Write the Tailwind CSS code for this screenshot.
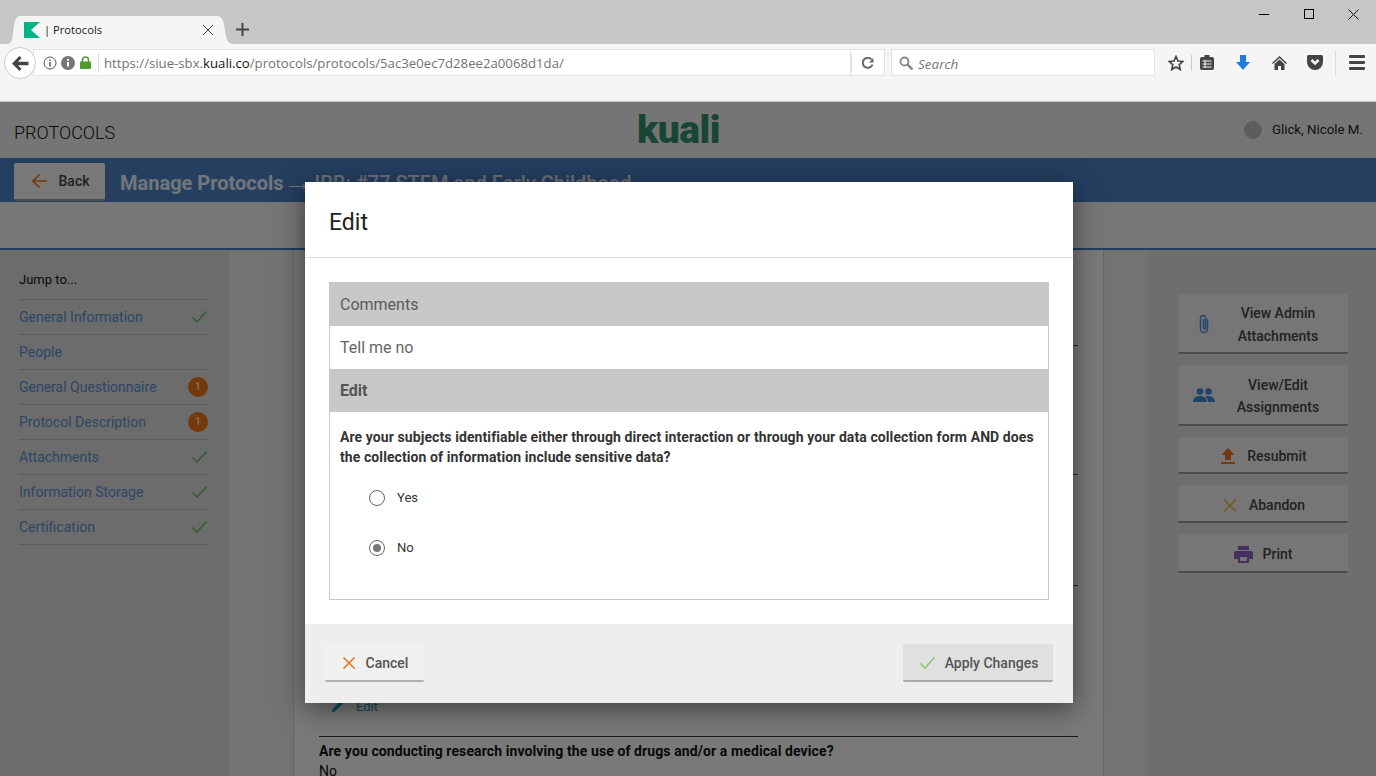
<!DOCTYPE html>
<html lang="en">
<head>
    <meta charset="UTF-8">
    <title>| Protocols</title>
    <script src="https://cdn.jsdelivr.net/npm/@tailwindcss/browser@4"></script>
</head>
<body class="w-[1376px] h-[776px] overflow-hidden flex flex-col bg-white font-['Roboto',sans-serif]">
    <!-- browser tab strip -->
    <div class="h-[44px] shrink-0 bg-[#c6c6c6] flex items-end pl-[6px] relative">
        <svg class="shrink-0" width="14" height="28" viewBox="0 0 14 28" fill="#f5f5f5"><path d="M0 28c5 0 6-3 7-10C8 8 9 0 14 0v28z"/></svg>
        <div class="w-[197px] h-[28px] bg-[#f5f5f5] flex items-center pl-[4px] pr-[3px] gap-[4px] font-['Open_Sans',sans-serif] text-[11.2px] text-[#222]">
            <svg class="shrink-0 mr-[2px]" width="16" height="16" viewBox="0 0 16 16"><rect width="16" height="16" fill="#00b488"/><path d="M16 0L7 8l9 8z" fill="#f5f5f5"/></svg>
            <span class="flex-1 -ml-[2px]">| Protocols</span>
            <svg width="12" height="12" viewBox="0 0 12 12" stroke="#444" fill="none"><path d="M1 1l10 10M11 1L1 11"/></svg>
        </div>
        <svg class="shrink-0" width="16" height="28" viewBox="0 0 16 28" fill="#f5f5f5"><path d="M0 0c5 0 7 6 8 14 1 9 3 14 8 14H0z"/></svg>
        <svg class="ml-[3px] mb-[8px]" width="13" height="13" viewBox="0 0 13 13" stroke="#444" stroke-width="2" fill="none"><path d="M6.500 0v13M0 6.500h13"/></svg>
        <div class="absolute top-0 right-0 h-[28px] flex items-center">
            <div class="w-[45px] flex justify-center"><div class="w-[10px] h-px bg-black"></div></div>
            <div class="w-[45px] flex justify-center"><div class="w-[10px] h-[10px] border border-black"></div></div>
            <div class="w-[45px] flex justify-center"><svg width="11" height="11" viewBox="0 0 11 11" stroke="#111" fill="none"><path d="M.5.5l10 10M10.500.5l-10 10"/></svg></div>
        </div>
    </div>
    <!-- browser toolbar -->
    <div class="h-[58px] shrink-0 bg-[#f5f5f5] border-b border-[#c8c8c8] font-['Open_Sans',sans-serif]">
        <div class="flex items-start pt-[3px] pl-[4px]">
            <div class="w-[32px] h-[32px] rounded-full bg-white border border-[#ccc] flex items-center justify-center z-10 shrink-0">
                <svg width="17" height="15" viewBox="0 0 17 15" fill="#444"><path d="M7.500 0l2 2L6 5.800h10.500v3.400H6l3.500 3.800-2 2L0 7.500z"/></svg>
            </div>
            <div class="w-[818px] h-[27px] mt-[2px] -ml-[3px] shrink-0 bg-white border border-[#e3e3e3] flex items-center text-[13.2px] text-[#737373] pl-[9px] whitespace-nowrap">
                <svg width="14" height="14" viewBox="0 0 14 14" fill="none" stroke="#555"><circle cx="7" cy="7" r="6"/><path d="M7 6v4.500M7 3.500v1.500" stroke-width="1.500"/></svg>
                <svg width="14" height="14" viewBox="0 0 14 14" class="ml-[4px]"><circle cx="7" cy="7" r="7" fill="#777"/><path d="M7 6v4.500M7 3v1.800" stroke="#fff" stroke-width="2"/></svg>
                <svg width="11" height="13" viewBox="0 0 11 13" class="ml-[5px]"><path d="M2.500 6V4a3 3 0 0 1 6 0v2" fill="none" stroke="#4f9a2c" stroke-width="1.500"/><rect y="5.500" width="11" height="7.500" rx="1" fill="#4f9a2c"/></svg>
                <div class="w-px h-[20px] bg-[#ddd] ml-[7px] mr-[5px]"></div>
                <span class="pt-[3px]">https://siue-sbx.<span class="text-[#111]">kuali.co</span>/protocols/protocols/5ac3e0ec7d28ee2a0068d1da/</span>
            </div>
            <div class="w-[34px] h-[27px] mt-[2px] shrink-0 bg-white border border-l-0 border-[#e3e3e3] flex items-center">
                <div class="w-px h-[18px] bg-[#ddd]"></div>
                <svg class="ml-[10px]" width="12" height="12" viewBox="0 0 12 12" fill="none" stroke="#666" stroke-width="2"><path d="M10.500 7.500A5 5 0 1 1 9.500 2.500"/><path d="M11.500 1v4.500H7z" fill="#666" stroke="none"/></svg>
            </div>
            <div class="w-[264px] h-[27px] mt-[2px] ml-[6px] shrink-0 bg-white border border-[#e3e3e3] flex items-center pl-[7px] gap-[5px] text-[13.5px] italic text-[#777]">
                <svg width="14" height="14" viewBox="0 0 14 14" fill="none" stroke="#888" stroke-width="1.800"><circle cx="5.500" cy="5.500" r="4"/><path d="M8.500 8.500l5 5" stroke-width="2.500"/></svg>
                <span class="pt-[3px]">Search</span>
            </div>
            <div class="flex items-center h-[27px] mt-[2px] ml-[13px] shrink-0">
                <svg width="16" height="16" viewBox="0 0 16 16" fill="none" stroke="#444" stroke-width="1.700"><path d="M8 1.500l2 4.500 4.800.5-3.600 3.200 1 4.800L8 12l-4.200 2.500 1-4.800L1.200 6.500 6 6z"/></svg>
                <div class="w-px h-[16px] bg-[#ccc] ml-[7px] mr-[8px]"></div>
                <svg width="14" height="15" viewBox="0 0 14 15"><rect y="2" width="14" height="13" rx="2" fill="#444"/><rect x="4.500" width="5" height="3" fill="#444"/><path d="M2.500 6h9M2.500 9h9M2.500 12h9M5 5v8" stroke="#f5f5f5"/></svg>
                <svg class="ml-[22px]" width="14" height="15" viewBox="0 0 14 15" fill="#1f7fe0"><path d="M4 0h6v7h4l-7 8-7-8h4z"/></svg>
                <svg class="ml-[22px]" width="15" height="14" viewBox="0 0 15 14" fill="#444"><path d="M7.500 0L15 7l-1 1-6.500-6L1 8 0 7z"/><path d="M2.500 8l5-4.500 5 4.500v6H9V10H6v4H2.500z"/></svg>
                <svg class="ml-[20px]" width="16" height="15" viewBox="0 0 16 15"><path d="M1.500 0h13A1.500 1.500 0 0 1 16 1.500V7A8 8 0 0 1 0 7V1.500A1.500 1.500 0 0 1 1.500 0z" fill="#444"/><path d="M4.500 5L8 8.500 11.500 5" fill="none" stroke="#f5f5f5" stroke-width="2.500"/></svg>
                <div class="w-px h-[26px] bg-[#ddd] ml-[12px] mr-[13px]"></div>
                <div class="w-[16px] flex flex-col gap-[3px]"><div class="h-[3px] bg-[#444] rounded-[1px]"></div><div class="h-[3px] bg-[#444] rounded-[1px]"></div><div class="h-[3px] bg-[#444] rounded-[1px]"></div></div>
            </div>
        </div>
    </div>

    <!-- application page -->
    <div class="relative flex-1 overflow-hidden bg-[#e6e6e6]">
        <header class="h-[56px] bg-[#ebebeb] flex items-center justify-between pl-[14px] pr-[13px] relative">
            <span class="text-[18px] font-light text-[#111] mt-[5px]">PROTOCOLS</span>
            <span class="absolute left-[637px] top-[3px] text-[39px] leading-[50px] font-black tracking-[-0.5px] text-[#2f8f68]">kuali</span>
            <div class="flex items-center gap-[10px] text-[13.3px] text-[#222] mt-[-1px]">
                <div class="w-[18px] h-[18px] rounded-full bg-[#bbb]"></div>
                <span>Glick, Nicole M.</span>
            </div>
        </header>
        <div class="h-[44px] bg-[#4a7ec2] flex items-start pl-[14px] overflow-hidden whitespace-nowrap">
            <button class="w-[91px] h-[38px] mt-[5px] bg-[#f0f0f0] rounded-[2px] border-b-2 border-[#999] flex items-center justify-center gap-[12px] pl-[2px] text-[14px] font-medium text-[#444]">
                <svg width="15" height="14" viewBox="0 0 15 14" fill="none" stroke="#e8701a" stroke-width="1.600"><path d="M15 7H1M7.500.5L1 7l6.500 6.500"/></svg>
                Back
            </button>
            <span class="ml-[15px] mt-[11px] text-[20px] leading-[28px] font-bold text-white/85">Manage Protocols</span>
            <svg class="ml-[5px] mt-[25px]" width="17" height="7" viewBox="0 0 17 7" fill="none" stroke="#fff" stroke-opacity="0.8"><path d="M0 3.500h16M13.500 1l3 2.500-3 2.500"/></svg>
            <span class="ml-[9px] mt-[11px] text-[20px] leading-[28px] font-medium text-white/80">IRB: #77 STEM and Early Childhood</span>
        </div>
        <div class="h-[46px] bg-[#ececec]"></div>
        <div class="h-[2px] bg-[#3a7ac4]"></div>
        <div class="flex h-[526px]">
            <aside class="w-[229px] bg-[#d8d8d8] pl-[19px] pr-[20px] text-[14px] pt-[20px]">
                <div class="h-[30px] text-[13px] text-[#111] border-b border-[#bbb]">Jump to...</div>
                <div class="h-[35px] flex items-center justify-between border-b border-[#bbb] text-[#5b8ccf]">General Information<svg class="mr-[2px]" width="15" height="12" viewBox="0 0 15 12" fill="none" stroke="#5cb85c" stroke-width="1.500"><path d="M.5 6.500L5 11 14.500.5"/></svg></div>
                <div class="h-[35px] flex items-center justify-between border-b border-[#bbb] text-[#5b8ccf]">People</div>
                <div class="h-[35px] flex items-center justify-between border-b border-[#bbb] text-[#5b8ccf]">General Questionnaire<span class="w-[20px] h-[20px] mr-[1px] rounded-full bg-[#e87012] text-white/80 text-[11px] font-medium flex items-center justify-center">1</span></div>
                <div class="h-[35px] flex items-center justify-between border-b border-[#bbb] text-[#5b8ccf]">Protocol Description<span class="w-[20px] h-[20px] mr-[1px] rounded-full bg-[#e87012] text-white/80 text-[11px] font-medium flex items-center justify-center">1</span></div>
                <div class="h-[35px] flex items-center justify-between border-b border-[#bbb] text-[#5b8ccf]">Attachments<svg class="mr-[2px]" width="15" height="12" viewBox="0 0 15 12" fill="none" stroke="#5cb85c" stroke-width="1.500"><path d="M.5 6.500L5 11 14.500.5"/></svg></div>
                <div class="h-[35px] flex items-center justify-between border-b border-[#bbb] text-[#5b8ccf]">Information Storage<svg class="mr-[2px]" width="15" height="12" viewBox="0 0 15 12" fill="none" stroke="#5cb85c" stroke-width="1.500"><path d="M.5 6.500L5 11 14.500.5"/></svg></div>
                <div class="h-[35px] flex items-center justify-between border-b border-[#bbb] text-[#5b8ccf]">Certification<svg class="mr-[2px]" width="15" height="12" viewBox="0 0 15 12" fill="none" stroke="#5cb85c" stroke-width="1.500"><path d="M.5 6.500L5 11 14.500.5"/></svg></div>
            </aside>
            <div class="w-[64px] bg-[#e6e6e6]"></div>
            <!-- form behind the dialog -->
            <main class="w-[811px] bg-[#f2f2f2] border-x border-[#ccc] pl-[25px] pr-[25px]">
                <div class="h-[96px] border-b border-[#555]"></div>
                <div class="h-[129px] border-b border-[#555]"></div>
                <div class="h-[111px] border-b border-[#555]"></div>
                <div class="mt-[111px] flex items-center gap-[13px] ml-[13px] text-[13px] text-[#1d9bb5]">
                    <svg width="11" height="11" viewBox="0 0 11 11" fill="#1d9bb5"><path d="M8.500 0L11 2.500 3 10.500 0 11l.5-3z"/></svg>
                    Edit
                </div>
                <div class="mt-[19px] border-t border-[#333] pt-[4px] text-[14px] leading-[20px] tracking-[0.1px] text-[#111]">
                    <p class="font-bold">Are you conducting research involving the use of drugs and/or a medical device?</p>
                    <p>No</p>
                </div>
            </main>
            <div class="w-[44px] bg-[#e6e6e6]"></div>
            <aside class="flex-1 bg-[#dcdcdc] pt-[44px] pl-[30px] pr-[28px] flex flex-col gap-[11px] text-[14px] font-medium text-[#444] text-center">
                <button class="h-[60px] bg-[#ececec] rounded-[2px] border-b-2 border-[#999] flex items-center relative pt-[4px]">
                    <svg class="absolute left-[19px] top-[20px]" width="14" height="20" viewBox="0 0 14 20" fill="none" stroke="#4a90d9" stroke-width="1.500"><path d="M10.500 5v10a3.500 3.500 0 0 1-7 0V4a2.500 2.500 0 0 1 5 0v10a1 1 0 0 1-2 0V5"/></svg>
                    <span class="w-full leading-[23px] pl-[30px]">View Admin<br>Attachments</span>
                </button>
                <button class="h-[61px] bg-[#ececec] rounded-[2px] border-b-2 border-[#999] flex items-center relative pt-[3px]">
                    <svg class="absolute left-[15px] top-[23px]" width="22" height="14" viewBox="0 0 22 14" fill="#3d84d6"><circle cx="7" cy="3.500" r="3.300"/><circle cx="15.500" cy="3.500" r="3.300"/><path d="M0 14c0-4 3-6 7-6s7 2 7 6zM15 14c0-2-1-4-2.500-5.500 4-1.500 9.500.5 9.500 5.500z"/></svg>
                    <span class="w-full leading-[22px] pl-[30px]">View/Edit<br>Assignments</span>
                </button>
                <button class="h-[37px] bg-[#ececec] rounded-[2px] border-b-2 border-[#999] flex items-center justify-center gap-[12px] pt-[3px] pl-[2px]">
                    <svg width="14" height="16" viewBox="0 0 14 16" fill="#e8701a"><path d="M7 0l6.500 7H10v5H4V7H.5zM0 14h14v2H0z"/></svg>
                    Resubmit
                </button>
                <button class="h-[38px] bg-[#ececec] rounded-[2px] border-b-2 border-[#999] flex items-center justify-center gap-[12px] pt-[4px] pl-[2px]">
                    <svg width="14" height="13" viewBox="0 0 14 13" fill="none" stroke="#e8b030" stroke-width="1.500"><path d="M1 .5l12 12M13 .5l-12 12"/></svg>
                    Abandon
                </button>
                <button class="h-[39px] bg-[#ececec] rounded-[2px] border-b-2 border-[#999] flex items-center justify-center gap-[10px] pt-[3px]">
                    <svg width="19" height="17" viewBox="0 0 19 17" fill="#8a5fb8"><path d="M4 0h11v4H4zM2 5h15a2 2 0 0 1 2 2v6h-4v4H4v-4H0V7a2 2 0 0 1 2-2zm4 6v4h7v-4z"/></svg>
                    Print
                </button>
            </aside>
        </div>

        <!-- dim layer -->
        <div class="absolute inset-0 bg-black/50"></div>

        <!-- edit dialog -->
        <div class="absolute left-[305px] top-[80px] w-[768px] h-[521px] bg-white flex flex-col shadow-[0_5px_25px_rgba(0,0,0,0.5)]">
            <div class="h-[76px] shrink-0 border-b border-[#ddd] flex items-center pl-[24px] pt-[7px] text-[23px] text-[#222]">Edit</div>
            <div class="flex-1 px-[24px] pt-[24px]">
                <div class="h-[318px] border border-[#c8c8c8] border-t-0">
                    <div class="h-[44px] -mx-px bg-[#c8c8c8] flex items-center px-[11px] pt-[2px] text-[16px] text-[#5a5a5a]">Comments</div>
                    <div class="h-[43px] flex items-center px-[10px] text-[16px] text-[#666]">Tell me no</div>
                    <div class="h-[43px] -mx-px bg-[#c8c8c8] flex items-center px-[11px] text-[16px] font-bold text-[#555]">Edit</div>
                    <p class="mt-[15px] px-[10px] text-[14px] leading-[20px] tracking-[0.09px] font-bold text-[#333]">Are your subjects identifiable either through direct interaction or through your data collection form AND does the collection of information include sensitive data?</p>
                    <div class="mt-[21px] ml-[39px] h-[20px] flex items-center gap-[12px] text-[13px] text-[#333]">
                        <span class="w-[16px] h-[16px] rounded-full border border-[#666] bg-white"></span>Yes
                    </div>
                    <div class="mt-[30px] ml-[39px] h-[20px] flex items-center gap-[12px] text-[13px] text-[#333]">
                        <span class="w-[16px] h-[16px] rounded-full border border-[#666] bg-white flex items-center justify-center"><span class="w-[8px] h-[8px] rounded-full bg-[#777]"></span></span>No
                    </div>
                </div>
            </div>
            <div class="h-[79px] shrink-0 bg-[#eee] flex items-start justify-between pt-[20px] px-[20px] text-[14px] font-medium text-[#555]">
                <button class="w-[99px] h-[38px] pt-[2px] pl-[2px] bg-[#f0f0f0] rounded-[2px] border-b-2 border-[#b0b0b0] flex items-center justify-center gap-[11px]">
                    <svg width="12" height="12" viewBox="0 0 12 12" fill="none" stroke="#e8701a" stroke-width="1.500"><path d="M.5.5l11 11M11.500.5l-11 11"/></svg>
                    Cancel
                </button>
                <button class="w-[150px] h-[38px] pt-[2px] pl-[2px] bg-[#e0e0e0] rounded-[2px] border-b-2 border-[#aaa] flex items-center justify-center gap-[10px]">
                    <svg width="15" height="12" viewBox="0 0 15 12" fill="none" stroke="#8cc46a" stroke-width="1.500"><path d="M.5 6.500L5 11 14.500.5"/></svg>
                    Apply Changes
                </button>
            </div>
        </div>
    </div>
</body>
</html>
